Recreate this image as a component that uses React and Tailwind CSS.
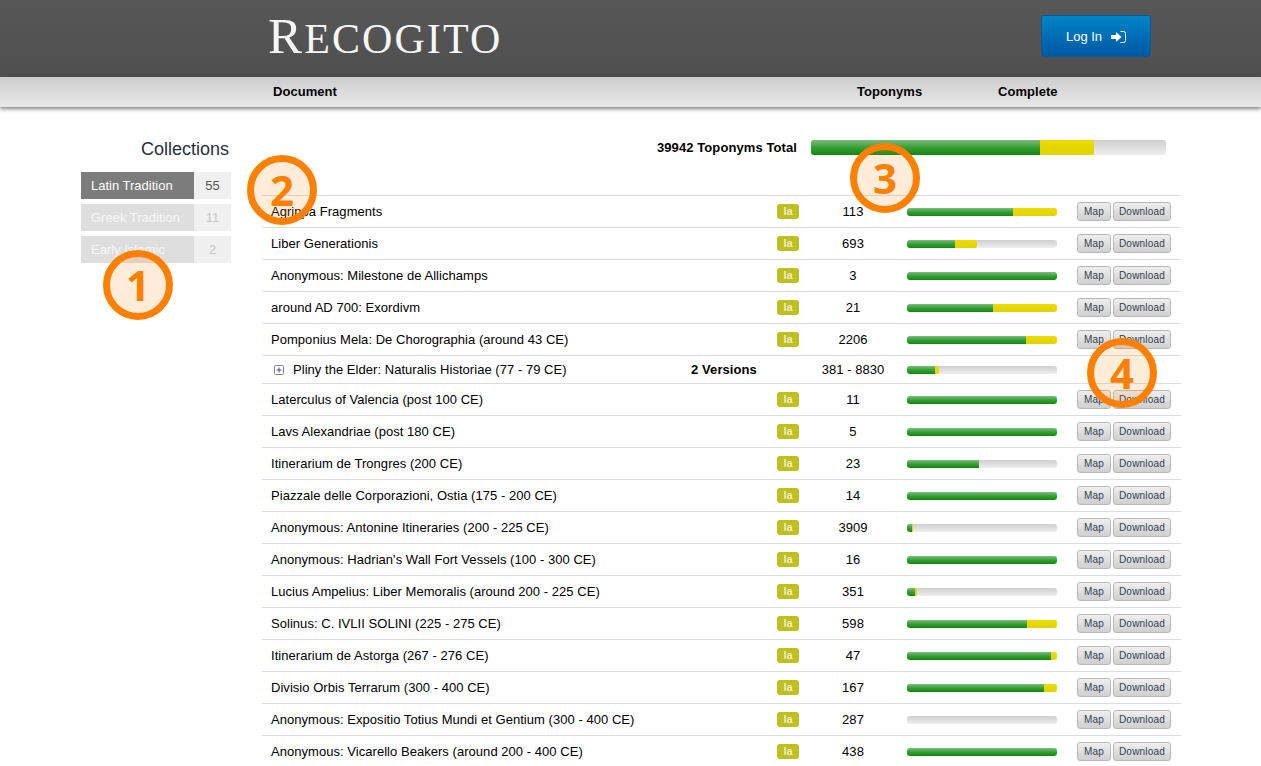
import React from "react";

const rows = [
  ["Agrippa Fragments", "113", 106, 44],
  ["Liber Generationis", "693", 48, 22],
  ["Anonymous: Milestone de Allichamps", "3", 150, 0],
  ["around AD 700: Exordivm", "21", 86, 64],
  ["Pomponius Mela: De Chorographia (around 43 CE)", "2206", 119, 31],
  ["Pliny the Elder: Naturalis Historiae (77 - 79 CE)", "381 - 8830", 28, 4, true],
  ["Laterculus of Valencia (post 100 CE)", "11", 150, 0],
  ["Lavs Alexandriae (post 180 CE)", "5", 150, 0],
  ["Itinerarium de Trongres (200 CE)", "23", 72, 0],
  ["Piazzale delle Corporazioni, Ostia (175 - 200 CE)", "14", 150, 0],
  ["Anonymous: Antonine Itineraries (200 - 225 CE)", "3909", 5, 1],
  ["Anonymous: Hadrian's Wall Fort Vessels (100 - 300 CE)", "16", 150, 0],
  ["Lucius Ampelius: Liber Memoralis (around 200 - 225 CE)", "351", 8, 2],
  ["Solinus: C. IVLII SOLINI (225 - 275 CE)", "598", 120, 30],
  ["Itinerarium de Astorga (267 - 276 CE)", "47", 144, 6],
  ["Divisio Orbis Terrarum (300 - 400 CE)", "167", 137, 13],
  ["Anonymous: Expositio Totius Mundi et Gentium (300 - 400 CE)", "287", 0, 0],
  ["Anonymous: Vicarello Beakers (around 200 - 400 CE)", "438", 150, 0],
];

const collections = [
  ["Latin Tradition", "55", true],
  ["Greek Tradition", "11", false],
  ["Early Islamic", "2", false],
];

function Bar({ green, yellow, tall }) {
  return (
    <div
      className={`flex overflow-hidden rounded-[3px] bg-gradient-to-b from-[#cfcfcf] to-[#eeeeee] ${
        tall ? "h-[15px] w-[355px]" : "h-2 w-[150px]"
      }`}
    >
      <div
        className="h-full bg-gradient-to-b from-[#7cba7c] via-[#34a034] to-[#0c880c]"
        style={{ width: green }}
      />
      <div
        className="h-full rounded-r-[2px] bg-gradient-to-b from-[#ecdc00] to-[#e2d200]"
        style={{ width: yellow }}
      />
    </div>
  );
}

function SmallButton({ className, children }) {
  return (
    <div
      className={`flex h-[19px] items-center justify-center rounded-[3px] border border-[#b8b8b8] bg-gradient-to-b from-[#efefef] to-[#cfcfcf] text-[10px] tracking-[0.2px] text-[#333f50] ${className}`}
    >
      {children}
    </div>
  );
}

function Row({ row }) {
  const [title, count, green, yellow, versions] = row;
  return (
    <div
      className={`flex items-center border-t border-[#dddddd] text-[13px] tracking-[0.04px] text-black ${
        versions ? "h-[28px]" : "h-8"
      }`}
    >
      {versions ? (
        <div className="flex w-[515px] items-center pl-3">
          <svg width="10" height="10" viewBox="0 0 10 10" className="mr-[9px] shrink-0">
            <rect x="0.5" y="0.5" width="9" height="9" rx="1" fill="none" stroke="#7f7fa5" />
            <path d="M2.5 5H7.5M5 2.5V7.5" stroke="#4a4a80" strokeWidth="1" />
          </svg>
          <span>{title}</span>
        </div>
      ) : (
        <div className="w-[515px] pl-[9px]">{title}</div>
      )}
      {versions ? (
        <div className="-ml-[86px] mr-[86px] w-[22px] font-bold tracking-[0.09px] whitespace-nowrap">2 Versions</div>
      ) : (
        <div className="flex h-[15px] w-[22px] items-center justify-center rounded-[3px] bg-[#bfbf1f] text-[11px] font-bold tracking-normal text-[#eeeec8]">
          la
        </div>
      )}
      <div className="w-[108px] text-center whitespace-nowrap">{count}</div>
      <Bar green={green} yellow={yellow} />
      {!versions && (
        <div className="ml-5 flex gap-0.5">
          <SmallButton className="w-[34px]">Map</SmallButton>
          <SmallButton className="w-[58px]">Download</SmallButton>
        </div>
      )}
    </div>
  );
}

function Callout({ n, className }) {
  return (
    <div
      className={`absolute flex h-[70px] w-[70px] items-center justify-center rounded-full border-[7px] border-[#ff8000] bg-[#ff8000]/15 font-['Open_Sans',sans-serif] text-[42px] leading-none font-bold text-[#ff8000] ${className}`}
    >
      {n}
    </div>
  );
}

export default function App() {
  return (
    <div className="relative h-screen overflow-hidden bg-white font-['Liberation_Sans',sans-serif]">
      <header className="flex h-[77px] bg-gradient-to-b from-[#575757] to-[#4f4f4f] pl-[268px]">
        <h1 className="w-[773px] pt-[6px] font-['Liberation_Serif',serif] text-[51px] leading-[60px] font-normal tracking-[2.1px] text-[#f6f6f6]">
          R<span className="text-[42px] uppercase">ecogito</span>
        </h1>
        <div className="mt-[15px] flex h-[42px] w-[110px] items-center justify-center gap-[9px] rounded-[3px] border border-[#0f5a96] bg-gradient-to-b from-[#0085c8] to-[#0058a3] pt-px text-[13px] text-white">
          <span>Log In</span>
          <svg width="15" height="12" viewBox="0 0 15 12" className="shrink-0">
            <path d="M0 4H5V1L10.5 6L5 11V8H0Z" fill="#fff" />
            <path d="M9.5 .5H12.5A2 2 0 0 1 14.5 2.5V9.5A2 2 0 0 1 12.5 11.5H9.5" fill="none" stroke="#fff" strokeWidth="1" />
          </svg>
        </div>
      </header>

      <div className="flex h-[30px] items-center bg-gradient-to-b from-[#cdcdcd] to-[#e8e8e8] pl-[273px] text-[13px] font-bold tracking-[0.05px] text-black shadow-[0_2px_4px_rgba(0,0,0,0.5)]">
        <span className="w-[584px]">Document</span>
        <span className="w-[141px]">Toponyms</span>
        <span>Complete</span>
      </div>

      <main className="flex pl-[81px]">
        <aside className="w-[150px] pt-[30px]">
          <h2 className="pr-[2px] text-right text-[18px] leading-[24px] text-[#27303c]">Collections</h2>
          <ul className="mt-[11px] flex flex-col gap-[5px]">
            {collections.map(([name, count, active]) => (
              <li key={name} className="flex h-[27px] items-center text-[13px]">
                <span
                  className={`flex h-full w-[113px] items-center pl-[10px] ${
                    active ? "bg-[#7c7c7c] text-white" : "bg-[#dedede] text-[#f6f6f6]"
                  }`}
                >
                  {name}
                </span>
                <span
                  className={`flex h-full w-[37px] items-center justify-center bg-[#f0f0f0] ${
                    active ? "text-[#555555]" : "text-[#c6c6c6]"
                  }`}
                >
                  {count}
                </span>
              </li>
            ))}
          </ul>
        </aside>

        <section className="ml-[31px] w-[919px]">
          <div className="flex h-[88px] items-start pt-[33px] text-[13px] font-bold tracking-[0.09px] text-black">
            <div className="w-[535px] text-right leading-[15px]">39942 Toponyms Total</div>
            <div className="ml-[14px]">
              <Bar green={229} yellow={54} tall />
            </div>
          </div>
          {rows.map((r) => (
            <Row key={r[0]} row={r} />
          ))}
        </section>
      </main>

      <Callout n="1" className="left-[103px] top-[250px]" />
      <Callout n="2" className="left-[247px] top-[155px]" />
      <Callout n="3" className="left-[850px] top-[143px]" />
      <Callout n="4" className="left-[1087px] top-[338px]" />
    </div>
  );
}
